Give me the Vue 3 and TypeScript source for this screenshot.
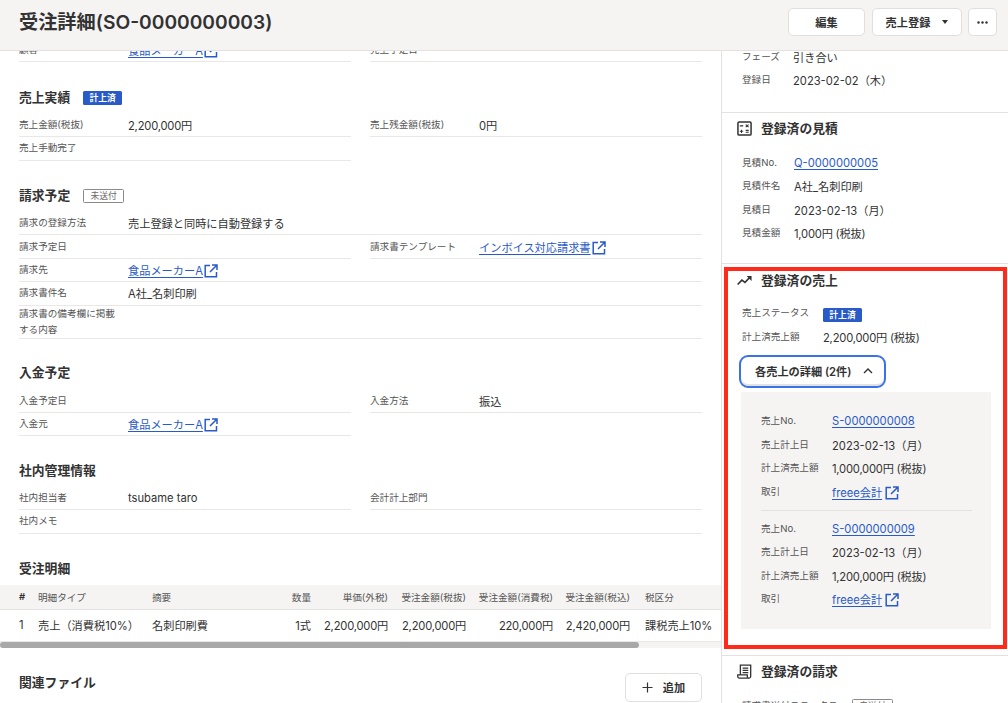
<script setup lang="ts">
interface Cell { label: string; value?: string; link?: boolean; ext?: boolean }
interface Row { cells: Cell[]; wide?: boolean; tall?: boolean }
interface Kv { label: string; value: string; link?: boolean; ext?: boolean }

const orderRows: Row[] = [
  { cells: [{ label: '顧客', value: '食品メーカーA', link: true, ext: true }, { label: '売上予定日' }] },
]
const salesRows: Row[] = [
  { cells: [{ label: '売上金額(税抜)', value: '2,200,000円' }, { label: '売上残金額(税抜)', value: '0円' }] },
  { cells: [{ label: '売上手動完了' }] },
]
const billingRows: Row[] = [
  { wide: true, cells: [{ label: '請求の登録方法', value: '売上登録と同時に自動登録する' }] },
  { cells: [{ label: '請求予定日' }, { label: '請求書テンプレート', value: 'インボイス対応請求書', link: true, ext: true }] },
  { wide: true, cells: [{ label: '請求先', value: '食品メーカーA', link: true, ext: true }] },
  { wide: true, cells: [{ label: '請求書件名', value: 'A社_名刺印刷' }] },
  { wide: true, tall: true, cells: [{ label: '請求書の備考欄に掲載する内容' }] },
]
const paymentRows: Row[] = [
  { cells: [{ label: '入金予定日' }, { label: '入金方法', value: '振込' }] },
  { cells: [{ label: '入金元', value: '食品メーカーA', link: true, ext: true }] },
]
const internalRows: Row[] = [
  { cells: [{ label: '社内担当者', value: 'tsubame taro' }, { label: '会計計上部門' }] },
  { wide: true, cells: [{ label: '社内メモ' }] },
]
const sections = [
  { title: '売上実績', badge: '計上済', badgeKind: 'solid', rows: salesRows },
  { title: '請求予定', badge: '未送付', badgeKind: 'outline', rows: billingRows },
  { title: '入金予定', badge: '', badgeKind: '', rows: paymentRows },
  { title: '社内管理情報', badge: '', badgeKind: '', rows: internalRows },
]
const tableHead = ['#', '明細タイプ', '摘要', '数量', '単価(外税)', '受注金額(税抜)', '受注金額(消費税)', '受注金額(税込)', '税区分']
const tableRow = ['1', '売上（消費税10%）', '名刺印刷費', '1式', '2,200,000円', '2,200,000円', '220,000円', '2,420,000円', '課税売上10%']

const topInfo: Kv[] = [
  { label: 'フェーズ', value: '引き合い' },
  { label: '登録日', value: '2023-02-02（木）' },
]
const quote: Kv[] = [
  { label: '見積No.', value: 'Q-0000000005', link: true },
  { label: '見積件名', value: 'A社_名刺印刷' },
  { label: '見積日', value: '2023-02-13（月）' },
  { label: '見積金額', value: '1,000円 (税抜)' },
]
const saleDetails: Kv[][] = [
  [
    { label: '売上No.', value: 'S-0000000008', link: true },
    { label: '売上計上日', value: '2023-02-13（月）' },
    { label: '計上済売上額', value: '1,000,000円 (税抜)' },
    { label: '取引', value: 'freee会計', link: true, ext: true },
  ],
  [
    { label: '売上No.', value: 'S-0000000009', link: true },
    { label: '売上計上日', value: '2023-02-13（月）' },
    { label: '計上済売上額', value: '1,200,000円 (税抜)' },
    { label: '取引', value: 'freee会計', link: true, ext: true },
  ],
]
const amountClass = (v?: string) => ({ amount: !!v && v.includes(',') })
</script>

<template>
  <div class="page">
    <header class="topbar">
      <h1 class="title">受注詳細(SO-0000000003)</h1>
      <div class="actions">
        <button class="btn btn-edit">編集</button>
        <button class="btn btn-sales">売上登録<span class="caret"></span></button>
        <button class="btn btn-more" aria-label="その他">
          <svg width="11" height="3" viewBox="0 0 11 3"><circle cx="1.5" cy="1.5" r="1.2" /><circle cx="5.5" cy="1.5" r="1.2" /><circle cx="9.5" cy="1.5" r="1.2" /></svg>
        </button>
      </div>
    </header>

    <main class="body">
      <div class="left">
        <div class="left-scroll">
          <div v-for="(row, i) in orderRows" :key="i" class="row-grid">
            <div v-for="cell in row.cells" :key="cell.label" class="cell">
              <span class="cell-label">{{ cell.label }}</span>
              <a v-if="cell.link" class="link cell-value">{{ cell.value }}<svg class="ext" viewBox="0 0 14 14"><path d="M6 1.5H1.2v11.3h11.3V8M8 1h5v5M13 1 6 8" /></svg></a>
            </div>
          </div>

          <section v-for="sec in sections" :key="sec.title" class="block">
            <div class="block-head">
              <h2 class="h2">{{ sec.title }}</h2>
              <span v-if="sec.badge" class="badge" :class="sec.badgeKind">{{ sec.badge }}</span>
            </div>
            <div v-for="(row, i) in sec.rows" :key="i" class="row-grid" :class="{ wide: row.wide, tall: row.tall }">
              <div v-for="cell in row.cells" :key="cell.label" class="cell">
                <span class="cell-label">{{ cell.label }}</span>
                <a v-if="cell.link" class="link cell-value">{{ cell.value }}<svg class="ext" viewBox="0 0 14 14"><path d="M6 1.5H1.2v11.3h11.3V8M8 1h5v5M13 1 6 8" /></svg></a>
                <span v-else-if="cell.value" class="cell-value" :class="amountClass(cell.value)">{{ cell.value }}</span>
              </div>
            </div>
          </section>

          <section class="block table-block">
            <div class="block-head"><h2 class="h2">受注明細</h2></div>
            <div class="table-row table-head">
              <span v-for="h in tableHead" :key="h">{{ h }}</span>
            </div>
            <div class="table-row table-body">
              <span v-for="c in tableRow" :key="c" :class="amountClass(c)">{{ c }}</span>
            </div>
            <div class="scroll-track"><div class="scroll-thumb"></div></div>
          </section>

          <section class="files">
            <h2 class="h2">関連ファイル</h2>
            <button class="btn btn-add">
              <svg width="11" height="11" viewBox="0 0 11 11"><path d="M5.5 .5v10M.5 5.5h10" /></svg>
              追加
            </button>
          </section>
        </div>
      </div>

      <aside class="right">
        <div class="right-scroll">
          <section class="side first">
            <div v-for="r in topInfo" :key="r.label" class="kv kv-top">
              <span class="kv-label">{{ r.label }}</span>
              <span class="kv-value">{{ r.value }}</span>
            </div>
          </section>

          <section class="side quote">
            <h3 class="h3">
              <svg class="side-icon calc" viewBox="0 0 16 16"><rect x="1" y="1" width="14" height="14" rx="1.2" /><path class="thin" d="M3 5.2h3.6M9.3 3.8l3 2.8M12.3 3.8l-3 2.8M3 11h3.6M4.8 9.2v3.6M9.3 10h3.2M9.3 12h3.2" /></svg>
              登録済の見積
            </h3>
            <div class="kv-list">
              <div v-for="r in quote" :key="r.label" class="kv kv-quote">
                <span class="kv-label">{{ r.label }}</span>
                <a v-if="r.link" class="link kv-value">{{ r.value }}</a>
                <span v-else class="kv-value" :class="amountClass(r.value)">{{ r.value }}</span>
              </div>
            </div>
          </section>

          <section class="side sales">
            <h3 class="h3">
              <svg class="side-icon trend" viewBox="0 0 16 16"><path d="M.7 12.2 5.2 7.6l3.3 2.5 4.8-5.2" /><path class="fill" d="M10.3 3.2h5.2v5.2z" /></svg>
              登録済の売上
            </h3>
            <div class="kv-list">
              <div class="kv kv-sales">
                <span class="kv-label">売上ステータス</span>
                <span class="badge solid low">計上済</span>
              </div>
              <div class="kv kv-sales">
                <span class="kv-label">計上済売上額</span>
                <span class="kv-value amount">2,200,000円 (税抜)</span>
              </div>
            </div>
            <button class="toggle">
              各売上の詳細 (2件)
              <svg width="10" height="6" viewBox="0 0 10 6"><path d="M1 5 5 1l4 4" /></svg>
            </button>
            <div class="detail">
              <div v-for="(group, g) in saleDetails" :key="g" class="detail-group">
                <div v-for="r in group" :key="r.label" class="kv kv-detail">
                  <span class="kv-label">{{ r.label }}</span>
                  <a v-if="r.link" class="link kv-value">{{ r.value }}<svg v-if="r.ext" class="ext ext-detail" viewBox="0 0 14 14"><path d="M6 1.5H1.2v11.3h11.3V8M8 1h5v5M13 1 6 8" /></svg></a>
                  <span v-else class="kv-value" :class="amountClass(r.value)">{{ r.value }}</span>
                </div>
              </div>
            </div>
          </section>

          <section class="side invoice">
            <h3 class="h3">
              <svg class="side-icon" viewBox="0 0 16 16"><path d="M3.6 11.5V1.2h11v12.2a1.6 1.6 0 0 1-1.6 1.6H2.4A1.6 1.6 0 0 1 .8 13.4v-1.9h10.2v1.9A1.6 1.6 0 0 0 13 15M6 4.3h6M6 6.8h6M6 9.2h6" /></svg>
              登録済の請求
            </h3>
            <div class="kv-list invoice-list">
              <div class="kv kv-invoice">
                <span class="kv-label">請求書送付ステータス</span>
                <span class="badge outline">未送付</span>
              </div>
            </div>
          </section>
        </div>
        <div class="highlight"></div>
      </aside>
    </main>
  </div>
</template>

<style>
html, body { margin: 0; background: #fff; }
</style>

<style scoped>
.page {
  height: 703px;
  display: flex;
  flex-direction: column;
  overflow: hidden;
  color: #323232;
  font-family: Inter, "Noto Sans CJK JP", sans-serif;
  font-size: 11.2px;
}
.topbar {
  flex: none;
  height: 50px;
  box-sizing: content-box;
  border-bottom: 1px solid #e4e2e1;
  background: #f5f4f3;
  display: flex;
  align-items: center;
  justify-content: space-between;
  padding: 0 11px 0 19px;
  position: relative;
  z-index: 2;
}
.title { margin: 0; font-size: 19.2px; font-weight: 600; line-height: 1; position: relative; top: -2px; }
.actions { display: flex; gap: 7px; align-items: center; position: relative; top: -3px; }
.btn {
  height: 28px;
  box-sizing: border-box;
  background: #fff;
  border: 1px solid #e1dfdd;
  border-radius: 5px;
  color: #323232;
  font: 600 11.2px Inter, "Noto Sans CJK JP", sans-serif;
  display: flex;
  align-items: center;
  justify-content: center;
  padding: 0;
}
.btn-edit { width: 77px; }
.btn-sales { width: 90px; }
.caret {
  width: 0; height: 0; margin-left: 12px;
  border-left: 3.5px solid transparent;
  border-right: 3.5px solid transparent;
  border-top: 4px solid #323232;
}
.btn-more { width: 29px; margin-left: -1px; }
.btn-more svg { fill: #323232; }

.body { flex: 1; min-height: 0; display: flex; }
.left { width: 721px; flex: none; overflow: hidden; border-right: 1px solid #e4e2e1; box-sizing: content-box; }
.left-scroll { margin-top: -12px; }
.right { flex: 1; min-width: 0; overflow: hidden; position: relative; }
.right-scroll { margin-top: -6px; }

.row-grid {
  display: grid;
  grid-template-columns: 332px 332px;
  column-gap: 19px;
  padding: 0 19px;
}
.row-grid.wide { grid-template-columns: 683px; }
.cell {
  min-height: 23.4px;
  box-sizing: border-box;
  border-bottom: 1px solid #e9e8e7;
  display: flex;
  align-items: center;
}
.tall .cell { min-height: 33px; }
.cell-label {
  width: 109px;
  flex: none;
  font-size: 9.6px;
  color: #555;
  line-height: 16px;
  box-sizing: border-box;
}
.tall .cell-label { padding-right: 4px; }
.cell-value { font-size: 11.2px; color: #323232; }
a.cell-value, a.kv-value { color: #285ac8; }
.amount { letter-spacing: -0.2px; }
.link { color: #285ac8; text-decoration: underline; text-underline-offset: 2px; }
.ext {
  width: 14px; height: 14px;
  display: inline-block;
  vertical-align: -3px;
  margin-left: 1px;
  fill: none;
  stroke: #285ac8;
  stroke-width: 1.5;
}
.ext-detail { margin-left: 3px; }

.block { margin-top: 24.8px; }
.block:nth-of-type(1) { margin-top: 25.4px; }
.block:nth-of-type(2) { margin-top: 25.4px; }
.table-block { margin-top: 25.2px; }
.block-head {
  height: 20px;
  margin-bottom: 6px;
  padding: 0 19px;
  display: flex;
  align-items: center;
  gap: 13px;
}
.h2 { margin: 0; font-size: 12.8px; font-weight: 600; line-height: 20px; }
.badge {
  height: 14px;
  box-sizing: border-box;
  width: 39px;
  display: inline-flex;
  align-items: center;
  justify-content: center;
  font-size: 8.8px;
  font-weight: 600;
  border-radius: 1.5px;
}
.badge.low { margin-top: 4px; }
.badge.solid { background: #285ac8; color: #fff; }
.badge.outline { background: #fff; color: #6e6b6b; border: 1px solid #8c8989; font-weight: 400; width: 41px; }

.table-row {
  display: grid;
  grid-template-columns: 19px 114px 108px 51px 77px 78px 87px 77px 1fr;
  padding-left: 19px;
  align-items: center;
  white-space: nowrap;
}
.table-row span:nth-child(n+4):nth-child(-n+8) { text-align: right; }
.table-row span:nth-child(9) { padding-left: 15px; }
.table-head {
  height: 25px;
  box-sizing: border-box;
  background: #f5f4f3;
  border-bottom: 1px solid #e4e2e1;
  font-size: 9.6px;
  color: #555;
}
.table-head span:first-child { font-weight: 600; color: #323232; }
.table-body {
  height: 32px;
  box-sizing: border-box;
  border-bottom: 1px solid #e9e8e7;
  padding-bottom: 1px;
}
.scroll-track { height: 6px; background: #f5f4f3; }
.scroll-thumb { width: 639px; height: 6px; background: #a8a8a8; border-radius: 3px; }

.files {
  margin-top: 25px;
  padding: 0 19px;
  display: flex;
  justify-content: space-between;
  align-items: flex-start;
}
.btn-add { width: 77px; height: 29px; gap: 10px; }
.btn-add svg { stroke: #323232; stroke-width: 1.2; fill: none; }

.side { padding-left: 20px; border-bottom: 1px solid #e4e2e1; }
.side.first { padding-bottom: 20px; }
.side.quote { padding-bottom: 18.1px; }
.side.sales { padding-bottom: 26px; }
.side.invoice { border-bottom: none; }
.h3 {
  margin: 0 0 0 -5px;
  height: 20px;
  display: flex;
  align-items: center;
  gap: 9px;
  font-size: 12.8px;
  font-weight: 600;
  line-height: 20px;
}
.quote .h3 { margin-top: 6px; margin-bottom: 12.5px; }
.sales .h3 { margin-top: 7px; margin-bottom: 10px; }
.invoice .h3 { margin-top: 6px; margin-bottom: 12px; }
.side-icon {
  width: 15px; height: 15px;
  flex: none;
  fill: none;
  stroke: #323232;
  stroke-width: 1.4;
}
.side-icon.calc { stroke-width: 1.6; }
.side-icon .thin { stroke-width: 1.1; }
.side-icon.trend { stroke-width: 1.7; }
.side-icon .fill { fill: #323232; stroke: none; }
.kv { height: 23.4px; display: flex; align-items: center; white-space: nowrap; }
.kv-label { font-size: 9.6px; color: #555; flex: none; position: relative; top: -1px; }
.kv-value { font-size: 11.2px; color: #323232; }
.kv-top .kv-label { width: 51px; }
.kv-quote .kv-label { width: 52px; }
.kv-sales { height: 24px; }
.kv-sales .kv-label { width: 81px; }
.kv-detail .kv-label { width: 71px; }
.kv-invoice .kv-label { width: 110px; }
.toggle {
  width: 147px;
  height: 33px;
  box-sizing: border-box;
  margin: 6px 0 4px -3px;
  background: #fff;
  border: 2px solid #3a72e8;
  border-radius: 9px;
  box-shadow: inset 0 -2px 0 #e4e2e1;
  color: #323232;
  font: 600 11.2px Inter, "Noto Sans CJK JP", sans-serif;
  display: flex;
  align-items: center;
  padding: 0 0 0 14px;
  gap: 12px;
}
.toggle svg { fill: none; stroke: #323232; stroke-width: 1.4; }
.detail {
  width: 250px;
  margin-left: -1px;
  padding: 17.8px 19px 18px 20px;
  box-sizing: border-box;
  background: #f5f4f3;
}
.detail-group + .detail-group {
  margin-top: 6.5px;
  padding-top: 6.5px;
  border-top: 1px solid #e4e2e1;
}
.highlight {
  position: absolute;
  left: 2px;
  top: 216px;
  width: 283px;
  height: 382px;
  box-sizing: border-box;
  border: 4px solid #ff2a1a;
  pointer-events: none;
}
</style>
